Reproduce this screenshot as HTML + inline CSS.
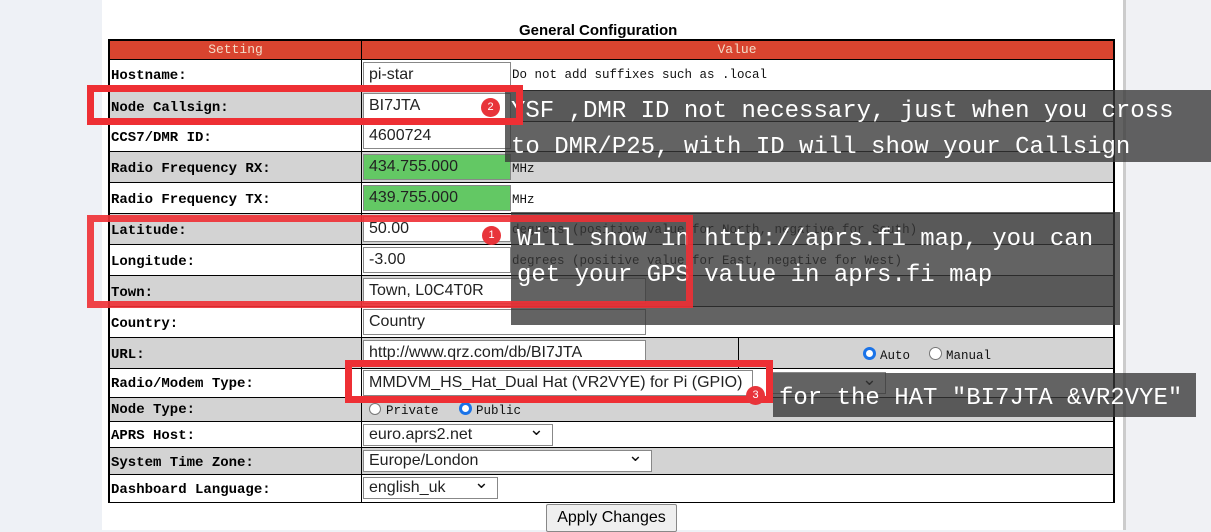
<!DOCTYPE html>
<html><head><meta charset="utf-8"><style>
*{margin:0;padding:0;box-sizing:border-box}
body{width:1211px;height:530px;overflow:hidden;background:#eef1f6;position:relative;font-family:"Liberation Mono",monospace}
.a{position:absolute}
.lbl{position:absolute;left:111px;font-weight:bold;font-size:14px;color:#000}
.row{position:absolute;left:110px;width:1003px;border-bottom:1px solid #000}
.g{background:#d3d3d3}.w{background:#fff}
.inp{position:absolute;background:#fff;border:1px solid #888;font-family:"Liberation Sans",sans-serif;font-size:16px;color:#222;padding-left:5px;line-height:24px;height:26px}
.grn{background:#63c864}
.note{position:absolute;font-size:12.5px;color:#111}
.dark{position:absolute;background:rgba(55,55,55,.78);color:#fff;font-family:"Liberation Mono",monospace;font-size:24px;line-height:36px;padding-left:6px;white-space:nowrap}
.red{position:absolute;border:7px solid #ee2f34}
.dot{position:absolute;width:19px;height:19px;border-radius:50%;background:#e8343a;color:#fff;font-family:"Liberation Sans",sans-serif;font-size:11px;text-align:center;line-height:19px}
.sel::after{content:"⌄";position:absolute;right:8px;top:-6px;font-size:18px;color:#111}
</style></head><body>
<div class="a" style="left:102px;top:0;width:1021px;height:530px;background:#fff"></div>
<div class="a" style="left:1123px;top:0;width:3px;height:530px;background:#ccc"></div>
<div class="a" style="left:1126px;top:0;width:85px;height:530px;background:#f0f1f4"></div>
<div class="a" style="left:519px;top:22px;font-family:'Liberation Sans',sans-serif;font-weight:bold;font-size:15px;">General Configuration</div>
<div class="a" style="left:108px;top:39px;width:1007px;height:464px;border:2px solid #000;background:#fff"></div>
<div class="a" style="left:110px;top:41px;width:1003px;height:19px;background:#d9442f;border-bottom:1px solid #000"></div>
<div class="a" style="left:110px;top:42px;width:251px;text-align:center;color:#f3dcc8;font-size:13px">Setting</div>
<div class="a" style="left:361px;top:42px;width:752px;text-align:center;color:#f3dcc8;font-size:13px">Value</div>

<div class="row w" style="top:60px;height:31px"></div>
<div class="row g" style="top:91px;height:31px"></div>
<div class="row w" style="top:122px;height:30px"></div>
<div class="row g" style="top:152px;height:31px"></div>
<div class="row w" style="top:183px;height:31px"></div>
<div class="row g" style="top:214px;height:31px"></div>
<div class="row w" style="top:245px;height:31px"></div>
<div class="row g" style="top:276px;height:31px"></div>
<div class="row w" style="top:307px;height:31px"></div>
<div class="row g" style="top:338px;height:31px"></div>
<div class="row w" style="top:369px;height:29px"></div>
<div class="row g" style="top:398px;height:24px"></div>
<div class="row w" style="top:422px;height:26px"></div>
<div class="row g" style="top:448px;height:27px"></div>
<div class="row w" style="top:475px;height:27px;border:none"></div>
<div class="a" style="left:361px;top:41px;width:1px;height:461px;background:#000"></div>
<div class="a" style="left:738px;top:338px;width:1px;height:31px;background:#000"></div>

<div class="lbl" style="top:68px">Hostname:</div>
<div class="lbl" style="top:100px">Node Callsign:</div>
<div class="lbl" style="top:130px">CCS7/DMR ID:</div>
<div class="lbl" style="top:161px">Radio Frequency RX:</div>
<div class="lbl" style="top:192px">Radio Frequency TX:</div>
<div class="lbl" style="top:223px">Latitude:</div>
<div class="lbl" style="top:254px">Longitude:</div>
<div class="lbl" style="top:285px">Town:</div>
<div class="lbl" style="top:316px">Country:</div>
<div class="lbl" style="top:347px">URL:</div>
<div class="lbl" style="top:376px">Radio/Modem Type:</div>
<div class="lbl" style="top:402px">Node Type:</div>
<div class="lbl" style="top:428px">APRS Host:</div>
<div class="lbl" style="top:455px">System Time Zone:</div>
<div class="lbl" style="top:482px">Dashboard Language:</div>

<div class="inp" style="left:363px;top:62px;width:148px">pi-star</div>
<div class="note" style="left:512px;top:68px">Do not add suffixes such as .local</div>
<div class="inp" style="left:363px;top:93px;width:148px">BI7JTA</div>
<div class="inp" style="left:363px;top:123px;width:148px">4600724</div>
<div class="inp grn" style="left:363px;top:154px;width:148px">434.755.000</div>
<div class="note" style="left:512px;top:162px">MHz</div>
<div class="inp grn" style="left:363px;top:185px;width:148px">439.755.000</div>
<div class="note" style="left:512px;top:193px">MHz</div>
<div class="inp" style="left:363px;top:216px;width:148px">50.00</div>
<div class="note" style="left:512px;top:223px">degrees (positive value for North, negative for South)</div>
<div class="inp" style="left:363px;top:247px;width:148px">-3.00</div>
<div class="note" style="left:512px;top:254px">degrees (positive value for East, negative for West)</div>
<div class="inp" style="left:363px;top:278px;width:283px">Town, L0C4T0R</div>
<div class="inp" style="left:363px;top:309px;width:283px">Country</div>
<div class="inp" style="left:363px;top:340px;width:283px">http://www.qrz.com/db/BI7JTA</div>
<div class="a" style="left:863px;top:347px;width:13px;height:13px;border-radius:50%;border:3px solid #1a73e8;background:#fff"></div>
<div class="note" style="left:880px;top:349px">Auto</div>
<div class="a" style="left:929px;top:347px;width:13px;height:13px;border-radius:50%;border:1px solid #777;background:#fff"></div>
<div class="note" style="left:946px;top:349px">Manual</div>
<div class="inp" style="left:363px;top:370px;width:390px">MMDVM_HS_Hat_Dual Hat (VR2VYE) for Pi (GPIO)</div>
<div class="inp sel" style="left:772px;top:372px;width:114px;height:22px"></div>
<div class="a" style="left:369px;top:403px;width:12px;height:12px;border-radius:50%;border:1px solid #777;background:#fff"></div>
<div class="note" style="left:386px;top:404px">Private</div>
<div class="a" style="left:459px;top:402px;width:13px;height:13px;border-radius:50%;border:3px solid #1a73e8;background:#fff"></div>
<div class="note" style="left:476px;top:404px">Public</div>
<div class="inp sel" style="left:363px;top:424px;width:190px;height:22px;line-height:20px">euro.aprs2.net</div>
<div class="inp sel" style="left:363px;top:450px;width:289px;height:22px;line-height:20px">Europe/London</div>
<div class="inp sel" style="left:363px;top:477px;width:135px;height:22px;line-height:20px">english_uk</div>
<div class="a" style="left:546px;top:504px;width:131px;height:28px;background:#efefef;border:1px solid #888;border-radius:2px;font-family:'Liberation Sans',sans-serif;font-size:16px;text-align:center;line-height:26px">Apply Changes</div>

<div class="dark" style="left:505px;top:90px;width:706px;height:72px;padding-top:4px">YSF ,DMR ID not necessary, just when you cross<br>to DMR/P25, with ID will show your Callsign</div>
<div class="red" style="left:87px;top:85px;width:436px;height:40px"></div>
<div class="dot" style="left:481px;top:98px">2</div>

<div class="dark" style="left:511px;top:212px;width:609px;height:113px;padding-top:10px">Will show in http://aprs.fi map, you can<br>get your GPS value in aprs.fi map</div>
<div class="red" style="left:87px;top:215px;width:606px;height:93px;border-color:rgba(238,47,52,.9)"></div>
<div class="dot" style="left:482px;top:226px">1</div>

<div class="red" style="left:345px;top:360px;width:428px;height:43px"></div>
<div class="dark" style="left:773px;top:373px;width:423px;height:44px;padding-top:8px">for the HAT ″BI7JTA &amp;VR2VYE″</div>
<div class="dot" style="left:746px;top:386px">3</div>
</body></html>
